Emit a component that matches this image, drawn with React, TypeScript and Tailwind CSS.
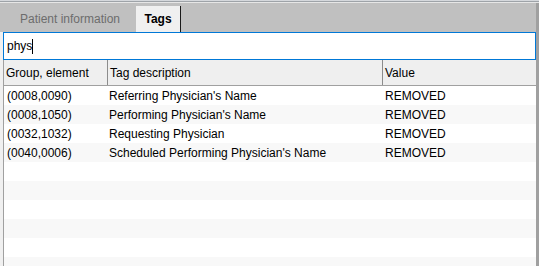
import React from "react";

const rows = [
  ["(0008,0090)", "Referring Physician's Name", "REMOVED"],
  ["(0008,1050)", "Performing Physician's Name", "REMOVED"],
  ["(0032,1032)", "Requesting Physician", "REMOVED"],
  ["(0040,0006)", "Scheduled Performing Physician's Name", "REMOVED"],
  ["", "", ""],
  ["", "", ""],
  ["", "", ""],
  ["", "", ""],
  ["", "", ""],
  ["", "", ""],
];

export default function App() {
  return (
    <div
      className="w-[539px] h-[266px] overflow-hidden bg-white flex flex-col text-[12px] text-black"
      style={{ fontFamily: '"Liberation Sans", Arial, sans-serif' }}
    >
      <div className="h-px bg-[#d5d8dc]" />
      <div className="h-px bg-[#9ea3a8]" />
      <div className="h-px bg-[#e6e6e6]" />
      <div className="flex flex-1 min-h-0">
        <div className="flex-1 flex flex-col min-w-0">
          {/* tab bar */}
          <div className="h-[29px] bg-[#c0c0c0] flex items-end pl-[4px]">
            <div className="w-[132px] h-[26px] flex items-center justify-center text-[#6d6d6d]">
              Patient information
            </div>
            <div className="w-[45px] h-[26px] bg-[#f0f0f0] border-r border-[#1a1a1a] flex items-center justify-center font-bold">
              Tags
            </div>
          </div>
          <div className="flex-1 flex flex-col pl-[3px] bg-[#f0f0f0] min-h-0">
            {/* search */}
            <div className="h-[28px] border border-[#0078d7] bg-white flex items-center pl-[3px]">
              <span>phys</span>
              <span className="w-px h-[15px] bg-black" />
            </div>
            {/* list */}
            <div className="flex-1 flex flex-col border-l border-[#a0a0a0] bg-white min-h-0">
              <div className="h-[26px] shrink-0 flex bg-[#efefef] border-b border-[#a0a0a0]">
                <div className="w-[104px] border-r border-[#8c8c8c] flex items-center pl-[2px]">
                  Group, element
                </div>
                <div className="w-[275px] border-r border-[#8c8c8c] flex items-center pl-[2px]">
                  Tag description
                </div>
                <div className="flex-1 flex items-center pl-[2px]">Value</div>
              </div>
              {rows.map((r, i) => (
                <div
                  key={i}
                  className={`h-[19px] shrink-0 flex items-center ${
                    i % 2 === 1 ? "bg-[#f8f8f8]" : "bg-white"
                  }`}
                >
                  <div className="w-[104px] pl-[3px] whitespace-nowrap">{r[0]}</div>
                  <div className="w-[276px] pl-[1px] whitespace-nowrap">{r[1]}</div>
                  <div className="flex-1 pl-[1px] whitespace-nowrap">{r[2]}</div>
                </div>
              ))}
            </div>
          </div>
        </div>
        <div className="w-[3px] bg-[#a0a0a0]" />
      </div>
    </div>
  );
}
